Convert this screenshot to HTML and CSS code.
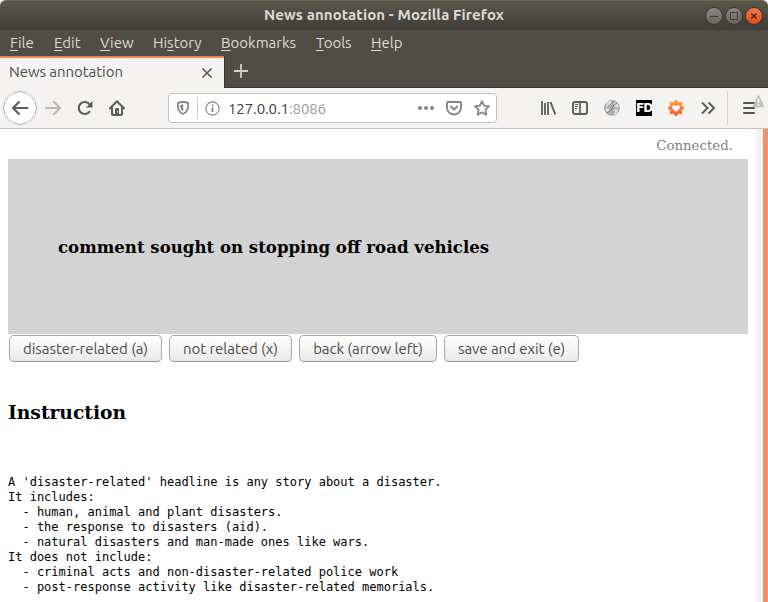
FILE: index.html
```html
<!DOCTYPE html>
<html lang="en">
<head>
<meta charset="utf-8">
<title>News annotation</title>
<link rel="stylesheet" href="styles.css">
</head>
<body>
<div class="window">
  <header class="titlebar">
    <span class="window-title">News annotation - Mozilla Firefox</span>
    <div class="window-controls">
      <svg width="60" height="20" viewBox="0 0 60 20">
        <defs>
          <linearGradient id="grey" x2="0" y2="1"><stop stop-color="#8c8a83"/><stop offset="1" stop-color="#65635d"/></linearGradient>
          <linearGradient id="red" x2="0" y2="1"><stop stop-color="#f37b50"/><stop offset="1" stop-color="#de4c1b"/></linearGradient>
        </defs>
        <g stroke="#35342f"><circle cx="10" cy="10" r="8.5" fill="url(#grey)"/><circle cx="30" cy="10" r="8.5" fill="url(#grey)"/><circle cx="50" cy="10" r="8.5" fill="url(#red)"/></g>
        <path d="M6 10.5h8M26.5 6.5h7v7h-7z" fill="none" stroke="#3c3b37"/>
        <path d="m47.4 7.4 5.2 5.2m0-5.2-5.2 5.2" stroke="#45281b" stroke-width="1.4"/>
      </svg>
    </div>
  </header>
  <nav class="menubar">
    <span class="menu file"><u>F</u>ile</span><span class="menu edit"><u>E</u>dit</span><span class="menu view"><u>V</u>iew</span><span class="menu history">Hi<u>s</u>tory</span><span class="menu bookmarks"><u>B</u>ookmarks</span><span class="menu tools"><u>T</u>ools</span><span class="menu help"><u>H</u>elp</span>
  </nav>
  <div class="tabs">
    <div class="tab"><span class="tab-label">News annotation</span>
      <svg width="12" height="12" viewBox="0 0 12 12"><path d="m1.5 1.5 9 9m0-9-9 9" stroke="#5d5d5b" stroke-width="1.7"/></svg>
    </div>
    <div class="tab-strip"><svg width="16" height="16" viewBox="0 0 16 16"><path d="M1 8h14M8 1v14" stroke="#d2cfc7" stroke-width="1.8"/></svg></div>
  </div>
  <div class="toolbar">
    <div class="navigation">
      <svg width="34" height="34" viewBox="0 0 34 34"><circle cx="17" cy="17" r="16.4" fill="#fff" stroke="#b1afad"/><path d="M24.5 17H10m6-6-6 6 6 6" fill="none" stroke="#5c5c5a" stroke-width="2.1" stroke-linecap="round" stroke-linejoin="round"/></svg>
      <svg class="forward" width="16" height="16" viewBox="0 0 16 16"><path d="M1 8h14M9 2l6 6-6 6" fill="none" stroke="#b9b8b6" stroke-width="2" stroke-linecap="round" stroke-linejoin="round"/></svg>
      <svg class="reload" width="16" height="16" viewBox="0 0 16 16"><path d="M12.4 11.8A6 6 0 1 1 12.7 4.5" fill="none" stroke="#5c5c5a" stroke-width="2.1" stroke-linecap="round"/><path d="M15.5 1v6.4H9z" fill="#5c5c5a"/></svg>
      <svg class="home" width="16" height="16" viewBox="0 0 16 16"><path d="M.8 8.5 8 1.2l7.2 7.3M3 7.5V14q0 1 1 1h8q1 0 1-1V7.5" fill="none" stroke="#5c5c5a" stroke-width="2" stroke-linecap="round" stroke-linejoin="round"/><path d="M6 15V9q0-1 1-1h2q1 0 1 1v6z" fill="#5c5c5a"/><path d="M8.5 11v1.5" stroke="#f4f3f1"/></svg>
    </div>
    <div class="address">
      <svg width="14" height="14" viewBox="0 0 14 14"><path d="M7 1c-2 0-3.8.4-5.2 1 0 4.500.2 9 5.200 11 5-2 5.200-6.500 5.200-11C10.800 1.400 9 1 7 1z" fill="none" stroke="#858583" stroke-width="1.8"/><path d="M7.2 3.400v7.200C4.500 9 4.200 6.500 4.200 4z" fill="#858583"/></svg>
      <span class="divider"></span>
      <svg class="info" width="15" height="15" viewBox="0 0 15 15"><circle cx="7.5" cy="7.5" r="6.6" fill="none" stroke="#858583" stroke-width="1.1"/><path d="M7.5 6.500V11M7.500 3.500v1.700" stroke="#858583" stroke-width="1.8"/></svg>
      <span class="url">127.0.0.1<span class="port">:8086</span></span>
      <div class="page-actions">
        <svg width="16" height="16" viewBox="0 0 16 16" fill="#858583"><circle cx="2" cy="8" r="2"/><circle cx="8" cy="8" r="2"/><circle cx="14" cy="8" r="2"/></svg>
        <svg width="16" height="16" viewBox="0 0 16 16" fill="none" stroke="#858583" stroke-width="1.9" stroke-linejoin="round" stroke-linecap="round"><path d="M2 2h12q1 0 1 1v4.500a7 7 0 0 1-14 0V3q0-1 1-1z"/><path d="m4.800 6.500 3.200 3 3.200-3"/></svg>
        <svg width="16" height="16" viewBox="0 0 16 16"><path d="m8 1.200 2.100 4.500 4.900.6-3.600 3.400.9 5L8 12.300l-4.300 2.400.9-5L1 6.300l4.900-.6z" fill="none" stroke="#858583" stroke-width="1.8" stroke-linejoin="round"/></svg>
      </div>
    </div>
    <div class="extensions">
      <svg width="16" height="16" viewBox="0 0 16 16"><path d="M2 1v14M5 3v12M8 2v13" stroke="#5c5c5a" stroke-width="1.8"/><path d="m10.500 2 4.800 12.500" stroke="#5c5c5a" stroke-width="1.9"/></svg>
      <svg width="16" height="16" viewBox="0 0 16 16" fill="none" stroke="#5c5c5a"><rect x="1" y="2" width="14" height="12" rx="2" stroke-width="1.9"/><path d="M8 2v12" stroke-width="1.7"/><path d="M3 4.500h3M3 6.500h3M3 8.500h2"/></svg>
      <svg width="16" height="16" viewBox="0 0 16 16"><circle cx="8" cy="8" r="7.9" fill="#aaa"/><path d="m3 2 4-1 2 2-3 3-4 1zm7 0 3 1 2 4-3 1-2-2zM1 9l3-1 2 2-2 3zm8 1 4-1 1 3-4 3z" fill="#e0e0e0"/><path d="m13 3-4 3-1 3-5 4M9 2 6 5" fill="none" stroke="#777"/><path d="m4 5 2 1m4 5v2" stroke="#888"/></svg>
      <span class="fd-badge">FD</span>
      <svg width="16" height="16" viewBox="0 0 16 16"><defs><linearGradient id="sun" gradientUnits="userSpaceOnUse" x1="0" y1="0" x2="0" y2="16"><stop stop-color="#ffa52e"/><stop offset="1" stop-color="#fb5635"/></linearGradient></defs><g fill="url(#sun)"><circle cx="8" cy="8" r="6.2"/><path d="M6.800 0h2.400l.8 3H6zM6.800 16h2.400l.8-3H6zM0 6.800v2.400l3 .8V6zM16 6.800v2.400l-3 .8V6zM1.500 3.200l1.700-1.700 3 1.500-3.200 3.200zM14.500 3.200l-1.700-1.700-3 1.500L13 6.200zM1.500 12.800l1.700 1.700 3-1.500L3 9.800zM14.500 12.800l-1.700 1.700-3-1.500L13 9.800z"/></g><path d="M8 12 4.500 8.500C3 6.500 5.500 4 8 6.200 10.500 4 13 6.500 11.500 8.500z" fill="#fff"/></svg>
      <svg width="16" height="16" viewBox="0 0 16 16"><path d="m2 2.500 5.500 5.500L2 13.500m6.500-11L14 8l-5.500 5.500" fill="none" stroke="#5c5c5a" stroke-width="2"/></svg>
    </div>
    <div class="app-menu"><svg width="25" height="25" viewBox="0 0 25 25"><path d="M3 8h10M3 13h10M3 18h10" stroke="#555553" stroke-width="2" stroke-linecap="round"/><path d="M17.500 1 12.500 11.500h10z" fill="#c1c0bf" stroke="#c1c0bf" stroke-width="1.6" stroke-linejoin="round"/><path d="M17.500 3.500V8M17.500 9.200v1.800" stroke="#fff" stroke-width="1.6"/></svg></div>
  </div>
  <div class="viewport">
    <main class="page">
      <div class="status">Connected.</div>
      <section class="headline">comment sought on stopping off road vehicles</section>
      <div class="choices">
        <button class="related">disaster-related (a)</button><button class="unrelated">not related (x)</button><button class="back">back (arrow left)</button><button class="save">save and exit (e)</button>
      </div>
      <h3>Instruction</h3>
<pre>A 'disaster-related' headline is any story about a disaster.
It includes:
  - human, animal and plant disasters.
  - the response to disasters (aid).
  - natural disasters and man-made ones like wars.
It does not include:
  - criminal acts and non-disaster-related police work
  - post-response activity like disaster-related memorials.</pre>
    </main>
    <div class="scrollbar"></div>
  </div>
</div>
</body>
</html>
```
FILE: styles.css
```css
* { box-sizing: border-box; }
body { margin: 0; background: #fff; font-family: Ubuntu, "Noto Sans", sans-serif; font-size: 15px; }
svg { display: block; flex: none; }
.window { width: 768px; height: 602px; overflow: hidden; display: flex; flex-direction: column; }
.titlebar { height: 30px; flex: none; display: grid; grid-template-columns: 64px 1fr 64px; align-items: center; border-radius: 6px 6px 0 0; background: linear-gradient(#5b584c, #3d3c38); border-top: 1px solid #69665a; }
.window-title { grid-column: 2; text-align: center; font-weight: 700; color: #dfdbd2; letter-spacing: .1px; white-space: nowrap; line-height: 26px; padding-bottom: 2px; }
.menubar { height: 26px; flex: none; display: flex; padding-left: 10px; background: #504d45; color: #dfdbd2; line-height: 26px; }
.menu { white-space: nowrap; }
.menu u { text-underline-offset: 2px; text-decoration-thickness: 1px; text-decoration-skip-ink: none; }
.file { width: 44px; }
.edit { width: 46px; }
.view { width: 53px; }
.history { width: 68px; }
.bookmarks { width: 95px; }
.tools { width: 55px; }
.tabs { height: 32px; flex: none; display: flex; background: #504d45; }
.tab { width: 224px; background: #f4f3f1; border-top: 2px solid #f0824f; display: flex; justify-content: space-between; align-items: center; padding: 0 11px 2px 9px; color: #4c4c4c; }
.tab-label { padding-bottom: 2px; letter-spacing: -.05px; }
.tab svg { margin-top: 2px; }
.tab-strip { flex: 1; border-left: 1px solid #353430; border-bottom: 1px solid #353430; padding: 7px 0 0 8px; }
.toolbar { height: 41px; flex: none; display: flex; align-items: center; background: #f4f3f1; border-bottom: 1px solid #c9c3bc; }
.navigation { width: 168px; display: flex; align-items: center; padding-left: 3px; }
.forward { margin-left: 8px; }
.reload, .home { margin-left: 16px; }
.address { width: 329px; height: 30px; display: flex; align-items: center; padding: 0 6px 0 7px; border: 1px solid #c5c3c0; border-radius: 4px; background: #fff; }
.divider { width: 1px; height: 22px; margin: 0 7px; background: #c6c6c6; }
.url { margin-left: 8px; padding-top: 1px; color: #3c3c3c; letter-spacing: -.1px; }
.port { color: #999; }
.page-actions { display: flex; gap: 12px; margin-left: auto; }
.extensions { display: flex; gap: 16px; padding-left: 43px; width: 230px; }
.fd-badge { width: 16px; height: 16px; background: #000; color: #fff; font: 700 12px/16px "DejaVu Sans", sans-serif; text-align: center; letter-spacing: -1px; overflow: hidden; }
.app-menu { height: 34px; flex: 1; border-left: 1px solid #d5d3d0; padding: 4px 0 0 13px; }
.viewport { flex: 1; display: flex; }
.page { width: 756px; padding: 8px 8px 0; color: #000; font-family: "DejaVu Serif", serif; }
.status { height: 22px; padding-right: 15px; text-align: right; color: #808080; font-size: 13.333px; line-height: 17px; }
.headline { height: 175px; background: #d3d3d3; padding: 78px 50px 0; font-size: 16.6px; font-weight: 700; line-height: 20px; }
.choices { display: flex; gap: 7px; padding: 1px; }
button { height: 27px; padding: 0; border: 1px solid #aaa8a5; border-bottom-color: #93918f; border-radius: 5px; background: linear-gradient(#fff, #ebe9e7); color: #4c4c4c; font: 15px/23px Ubuntu, "Noto Sans", sans-serif; letter-spacing: -.05px; white-space: nowrap; }
.related { width: 153px; }
.unrelated { width: 123px; }
.back { width: 138px; }
.save { width: 135px; }
h3 { margin: 37px 0 0; font-size: 18.72px; line-height: 24px; }
pre { margin: 51px 0 0; font: 12px/15px "DejaVu Sans Mono", monospace; }
.scrollbar { width: 12px; background: #f2f1f0; border-right: 5px solid #f28e68; }
```
